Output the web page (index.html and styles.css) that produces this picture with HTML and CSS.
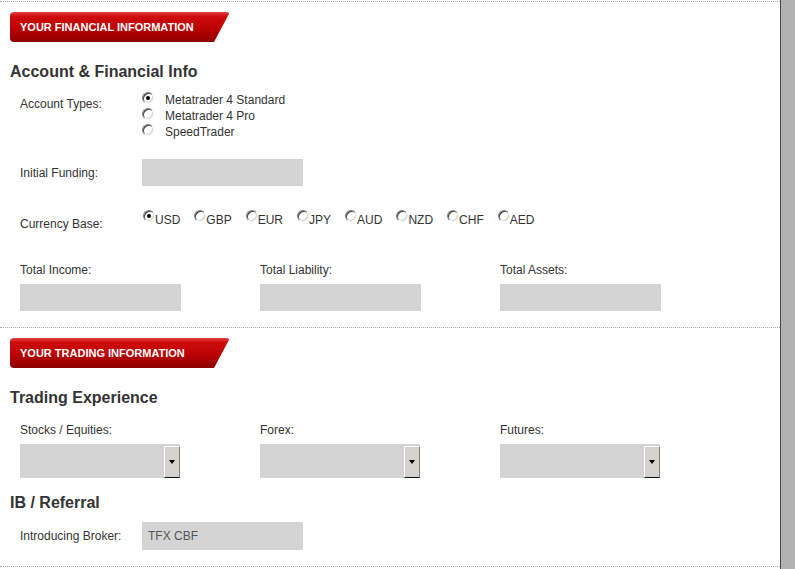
FILE: index.html
```html
<!DOCTYPE html>
<html>
<head>
<meta charset="utf-8">
<link rel="stylesheet" href="styles.css">
</head>
<body>
<div class="page">
  <main class="content">
    <section class="section section-financial">
      <div class="banner">YOUR FINANCIAL INFORMATION</div>
      <h2 class="heading">Account &amp; Financial Info</h2>

      <div class="row row-types">
        <span class="label label-offset">Account Types:</span>
        <div class="radio-list">
          <div class="opt"><span class="radio checked"></span><span>Metatrader 4 Standard</span></div>
          <div class="opt"><span class="radio"></span><span>Metatrader 4 Pro</span></div>
          <div class="opt"><span class="radio"></span><span>SpeedTrader</span></div>
        </div>
      </div>

      <div class="row row-funding">
        <span class="label">Initial Funding:</span>
        <div class="field"></div>
      </div>

      <div class="row row-currency">
        <span class="label label-offset">Currency Base:</span>
        <div class="radio-inline">
          <div class="opt-inline"><span class="radio checked"></span><span>USD</span></div>
          <div class="opt-inline"><span class="radio"></span><span>GBP</span></div>
          <div class="opt-inline"><span class="radio"></span><span>EUR</span></div>
          <div class="opt-inline"><span class="radio"></span><span>JPY</span></div>
          <div class="opt-inline"><span class="radio"></span><span>AUD</span></div>
          <div class="opt-inline"><span class="radio"></span><span>NZD</span></div>
          <div class="opt-inline"><span class="radio"></span><span>CHF</span></div>
          <div class="opt-inline"><span class="radio"></span><span>AED</span></div>
        </div>
      </div>

      <div class="cols cols-totals">
        <div class="col"><span class="col-label">Total Income:</span><div class="field"></div></div>
        <div class="col"><span class="col-label">Total Liability:</span><div class="field"></div></div>
        <div class="col"><span class="col-label">Total Assets:</span><div class="field"></div></div>
      </div>
    </section>

    <section class="section section-trading">
      <div class="banner">YOUR TRADING INFORMATION</div>
      <h2 class="heading">Trading Experience</h2>

      <div class="cols cols-experience">
        <div class="col"><span class="col-label">Stocks / Equities:</span><div class="select"><span class="select-btn"><span class="arrow"></span></span></div></div>
        <div class="col"><span class="col-label">Forex:</span><div class="select"><span class="select-btn"><span class="arrow"></span></span></div></div>
        <div class="col"><span class="col-label">Futures:</span><div class="select"><span class="select-btn"><span class="arrow"></span></span></div></div>
      </div>

      <h2 class="heading heading-ib">IB / Referral</h2>
      <div class="row row-broker">
        <span class="label">Introducing Broker:</span>
        <div class="field field-broker">TFX CBF</div>
      </div>
    </section>
    <div class="end-rule"></div>
  </main>
  <div class="gutter"></div>
</div>
</body>
</html>
```

FILE: styles.css
```css
html, body {
  margin: 0;
  padding: 0;
}
body {
  font-family: "Liberation Sans", Arial, sans-serif;
  font-size: 12px;
  color: #333;
  background: #fff;
}
.page {
  display: flex;
  height: 569px;
  overflow: hidden;
}
.content {
  width: 780px;
  flex: none;
  padding-top: 1px;
}
.gutter {
  flex: 1;
  background: #b1b1b1;
  border-left: 1px solid #4a4a4a;
}
.section {
  border-top: 1px dotted #a8a8a8;
}
.section-financial {
  padding-bottom: 16px;
}
.banner {
  margin: 10px 0 0 10px;
  width: 210px;
  height: 30px;
  line-height: 30px;
  padding-left: 10px;
  color: #fff;
  font-size: 11px;
  font-weight: bold;
  border-radius: 4px;
  background: linear-gradient(to bottom, #e24444 0%, #cf0d0d 14%, #bf0303 50%, #a30000 80%, #8a0000 100%);
  clip-path: polygon(0 0, 100% 0, calc(100% - 16px) 100%, 0 100%);
}
.heading {
  margin: 20px 0 0 10px;
  font-size: 16px;
  line-height: 20px;
  font-weight: bold;
  color: #333;
}
.heading-ib {
  margin-top: 15px;
}
.row {
  display: flex;
  padding-left: 20px;
}
.label {
  width: 122px;
  flex: none;
  line-height: 16px;
}
.label-offset {
  margin-top: 4px;
}
.row-types {
  margin-top: 10px;
}
.radio-list {
  display: flex;
  flex-direction: column;
}
.opt {
  display: flex;
  align-items: flex-start;
  height: 16px;
  line-height: 16px;
}
.opt .radio {
  margin-right: 11px;
}
.radio {
  position: relative;
  display: block;
  flex: none;
  width: 12px;
  height: 12px;
  box-sizing: border-box;
  border-radius: 50%;
  border: 1px solid;
  border-color: #808080 #f4f4f4 #f4f4f4 #808080;
  box-shadow: inset 1px 1px 0 #404040, inset -1px -1px 0 #d4d0c8;
  background: #fff;
}
.radio.checked::after {
  content: "";
  position: absolute;
  left: 3px;
  top: 3px;
  width: 4px;
  height: 4px;
  border-radius: 50%;
  background: #000;
}
.row-funding {
  margin-top: 19px;
  align-items: center;
}
.field {
  width: 161px;
  height: 27px;
  background: #d4d4d4;
}
.row-currency {
  margin-top: 26px;
}
.radio-inline {
  display: flex;
  gap: 14px;
  margin-left: 1px;
}
.opt-inline {
  display: flex;
  align-items: flex-start;
  height: 16px;
  line-height: 16px;
}
.opt-inline .radio {
  margin-top: -2px;
}
.cols {
  display: flex;
  padding-left: 20px;
}
.col {
  width: 240px;
  flex: none;
}
.col-label {
  display: block;
  line-height: 16px;
  margin-bottom: 6px;
}
.cols-totals {
  margin-top: 30px;
}
.cols-experience {
  margin-top: 14px;
}
.select {
  width: 160px;
  height: 34px;
  background: #d4d4d4;
  display: flex;
  justify-content: flex-end;
  align-items: flex-end;
}
.select-btn {
  width: 16px;
  height: 32px;
  box-sizing: border-box;
  background: #d6d3ce;
  border-left: 1px solid #fff;
  border-top: 1px solid #fff;
  border-right: 1px solid #808080;
  border-bottom: 1px solid #111;
  display: flex;
  align-items: center;
  justify-content: center;
}
.arrow {
  width: 0;
  height: 0;
  border-left: 3.5px solid transparent;
  border-right: 3.5px solid transparent;
  border-top: 4px solid #000;
}
.row-broker {
  margin-top: 9px;
  align-items: center;
}
.field-broker {
  height: 28px;
  line-height: 28px;
  padding-left: 6px;
  width: 155px;
  color: #555;
}
.end-rule {
  margin-top: 16px;
  border-top: 1px dotted #a8a8a8;
}
```
